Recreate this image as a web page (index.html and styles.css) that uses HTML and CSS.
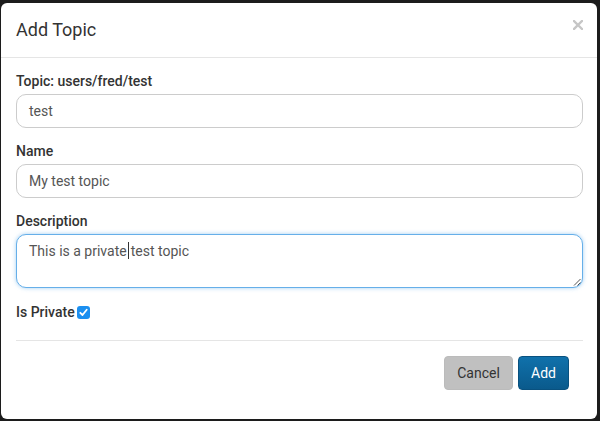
FILE: index.html
```html
<!DOCTYPE html>
<html>
<head>
<meta charset="utf-8">
<link rel="stylesheet" href="styles.css">
</head>
<body>
<div class="modal">
  <div class="modal-header">
    <h4 class="modal-title">Add Topic</h4>
    <span class="close" aria-label="Close">
      <svg width="10" height="10" viewBox="0 0 10 10"><path d="M1 1 L9 9 M9 1 L1 9" stroke="#c6c6c6" stroke-width="2.4" stroke-linecap="square"/></svg>
    </span>
  </div>
  <div class="modal-body">
    <div class="form-group">
      <label class="label">Topic: users/fred/test</label>
      <div class="input">test</div>
    </div>
    <div class="form-group">
      <label class="label">Name</label>
      <div class="input">My test topic</div>
    </div>
    <div class="form-group group-last">
      <label class="label">Description</label>
      <div class="input textarea">This is a private<span class="caret"></span>test topic<svg class="grip" width="8" height="8" viewBox="0 0 8 8"><path d="M1 7.5 L7.5 1 M4.5 7.5 L7.5 4.5" stroke="#555" stroke-width="1"/></svg></div>
    </div>
    <div class="check-row">
      <span class="label">Is Private</span>
      <svg class="checkbox" width="13" height="13" viewBox="0 0 13 13"><rect x="0" y="0" width="13" height="13" rx="3" fill="#1b8ff0"/><path d="M3.3 6.8 L5.5 9 L9.7 3.8" stroke="#fff" stroke-width="1.8" fill="none" stroke-linecap="round" stroke-linejoin="round"/></svg>
    </div>
  </div>
  <div class="modal-footer">
    <span class="btn btn-cancel">Cancel</span>
    <span class="btn btn-add">Add</span>
  </div>
</div>
</body>
</html>
```
FILE: styles.css
```css
html, body {
  margin: 0;
  padding: 0;
}
body {
  background: #1c1c1c;
  width: 600px;
  height: 421px;
  overflow: hidden;
  font-family: Roboto, "Helvetica Neue", Arial, sans-serif;
  color: #333;
  box-sizing: border-box;
  padding-top: 3px;
  padding-left: 1px;
}
.modal {
  width: 596px;
  height: 416px;
  background: #fff;
  border-radius: 6px;
  display: flex;
  flex-direction: column;
  box-sizing: border-box;
}
.modal-header {
  height: 55px;
  box-sizing: border-box;
  border-bottom: 1px solid #e5e5e5;
  display: flex;
  align-items: center;
  justify-content: space-between;
  padding: 0 14px 0 15px;
}
.modal-title {
  margin: 0;
  font-size: 18px;
  font-weight: 400;
  line-height: 26px;
  color: #333;
}
.close {
  align-self: flex-start;
  margin-top: 17px;
  width: 10px;
  height: 10px;
  display: flex;
}
.modal-body {
  padding: 13px 14px 0 15px;
}
.form-group {
  margin-bottom: 13px;
}
.group-last {
  margin-bottom: 14px;
}
.label {
  display: block;
  font-size: 14px;
  line-height: 20px;
  font-weight: 500;
  color: #333;
  margin-bottom: 3px;
}
.input {
  box-sizing: border-box;
  height: 34px;
  border: 1px solid #ccc;
  border-radius: 10px;
  padding: 6px 12px;
  font-size: 14px;
  line-height: 20px;
  color: #555;
  background: #fff;
}
.textarea {
  position: relative;
  height: 54px;
  border-color: #66afe9;
  box-shadow: 0 0 4px rgba(102, 175, 233, 0.6);
}
.caret {
  display: inline-block;
  width: 1px;
  height: 17px;
  background: #333;
  vertical-align: -3px;
  margin: 0 2px 0 1px;
}
.grip {
  position: absolute;
  right: 1px;
  bottom: 1px;
}
.check-row {
  display: flex;
  align-items: center;
  height: 20px;
}
.check-row .label {
  margin: 0;
  display: inline;
}
.checkbox {
  margin-left: 2px;
  margin-top: 1px;
}
.modal-footer {
  margin: 18px 14px 0 15px;
  border-top: 1px solid #e5e5e5;
  padding: 15px 14px 0 0;
  display: flex;
  justify-content: flex-end;
  gap: 5px;
}
.btn {
  display: inline-block;
  box-sizing: border-box;
  height: 34px;
  padding: 6px 12px;
  font-size: 14px;
  line-height: 20px;
  border-radius: 4px;
  border: 1px solid transparent;
}
.btn-cancel {
  background: #c0c0c0;
  border-color: #bbb;
  color: #333;
  width: 69px;
  text-align: center;
}
.btn-add {
  background: linear-gradient(#1071ab, #0a5a8c);
  border-color: #09517f;
  color: #fff;
  width: 51px;
  text-align: center;
}
```
